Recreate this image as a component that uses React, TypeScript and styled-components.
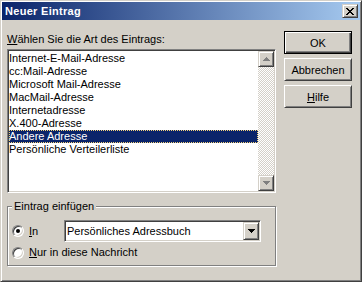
import styled, { createGlobalStyle } from 'styled-components'

const FACE = '#D4D0C8'

const GlobalStyle = createGlobalStyle`
  body {
    margin: 0;
    background: ${FACE};
    font-family: 'Liberation Sans', Arial, sans-serif;
    font-size: 11px;
    color: #000;
  }
`

const Window = styled.div`
  width: 362px;
  height: 282px;
  box-sizing: border-box;
  display: flex;
  flex-direction: column;
  padding: 1px;
  background: ${FACE};
  border: 1px solid;
  border-color: ${FACE} #404040 #404040 ${FACE};
  box-shadow: inset 1px 1px #fff, inset -1px -1px #808080;
`

const TitleBar = styled.div`
  height: 18px;
  flex: none;
  display: flex;
  align-items: center;
  justify-content: space-between;
  padding: 0 2px 0 3px;
  background: linear-gradient(90deg, #0a246a, #a6caf0);
`

const Title = styled.span`
  color: #fff;
  font-weight: bold;
  line-height: 13px;
  letter-spacing: 0.3px;
`

const CaptionButton = styled.button`
  width: 16px;
  height: 14px;
  padding: 0;
  margin: 0;
  display: flex;
  align-items: center;
  justify-content: center;
  background: ${FACE};
  border: 1px solid;
  border-color: ${FACE} #404040 #404040 ${FACE};
  box-shadow: inset 1px 1px #fff, inset -1px -1px #808080;
`

const Body = styled.div`
  flex: 1;
  display: flex;
  gap: 8px;
  padding: 11px 6px 0 5px;
`

const LeftColumn = styled.div`
  width: 269px;
  display: flex;
  flex-direction: column;
`

const Label = styled.div`
  margin-top: 2px;
  line-height: 13px;
`

const Accel = styled.u`
  text-decoration: underline;
  text-underline-offset: 1px;
`

const Sunken = styled.div`
  box-sizing: border-box;
  padding: 1px;
  background: #fff;
  border: 1px solid;
  border-color: #808080 #fff #fff #808080;
  box-shadow: inset 1px 1px #404040, inset -1px -1px ${FACE};
  display: flex;
`

const ListBox = styled(Sunken)`
  margin-top: 3px;
  height: 144px;
`

const Items = styled.ul`
  flex: 1;
  list-style: none;
  margin: 0;
  padding: 1px 0 0;
`

const Item = styled.li<{ $selected?: boolean }>`
  height: 13px;
  line-height: 13px;
  white-space: nowrap;
  background: ${(p) => (p.$selected ? '#0a246a' : 'transparent')};
  color: ${(p) => (p.$selected ? '#fff' : '#000')};
  outline: ${(p) => (p.$selected ? '1px dotted #f3d27a' : 'none')};
  outline-offset: -1px;
`

const ScrollBar = styled.div`
  width: 16px;
  display: flex;
  flex-direction: column;
`

const Raised = styled.div`
  box-sizing: border-box;
  display: flex;
  align-items: center;
  justify-content: center;
  background: ${FACE};
  border: 1px solid;
  border-color: ${FACE} #404040 #404040 ${FACE};
  box-shadow: inset 1px 1px #fff, inset -1px -1px #808080;
`

const ScrollButton = styled(Raised)`
  width: 16px;
  height: 16px;
  flex: none;
`

const Track = styled.div`
  flex: 1;
  background: repeating-conic-gradient(#fff 0 25%, ${FACE} 0 50%) 0 0 / 2px 2px;
`

const GroupBox = styled.fieldset`
  margin: 7px 0 0;
  padding: 7px 14px 6px 4px;
  border: 1px solid #808080;
  box-shadow: inset 1px 1px #fff, 1px 1px #fff;
  min-width: 0;
`

const Legend = styled.legend`
  padding: 0 2px;
  margin: 0;
  line-height: 13px;
  background: ${FACE};
`

const OptionRow = styled.div<{ $tall?: boolean }>`
  display: flex;
  align-items: center;
  height: ${(p) => (p.$tall ? '22px' : '13px')};
  margin-top: ${(p) => (p.$tall ? '0' : '4px')};
`

const Option = styled.label<{ $width?: number }>`
  display: flex;
  align-items: center;
  gap: 5px;
  line-height: 13px;
  width: ${(p) => (p.$width ? `${p.$width}px` : 'auto')};
  white-space: nowrap;
`

const Radio = styled.span<{ $checked?: boolean }>`
  position: relative;
  width: 12px;
  height: 12px;
  box-sizing: border-box;
  flex: none;
  border-radius: 50%;
  background: #fff;
  border: 1px solid;
  border-color: #808080 #fff #fff #808080;
  box-shadow: inset 1px 1px #404040, inset -1px -1px ${FACE};

  &::after {
    content: '';
    display: ${(p) => (p.$checked ? 'block' : 'none')};
    position: absolute;
    left: 3px;
    top: 3px;
    width: 4px;
    height: 4px;
    border-radius: 50%;
    background: #000;
  }
`

const ComboBox = styled(Sunken)`
  width: 197px;
  height: 22px;
`

const ComboText = styled.span`
  flex: 1;
  padding-left: 1px;
  line-height: 18px;
  white-space: nowrap;
`

const ComboButton = styled(Raised)`
  width: 16px;
  height: 18px;
`

const ButtonColumn = styled.div`
  display: flex;
  flex-direction: column;
  gap: 4px;
`

const PushButton = styled.button<{ $default?: boolean }>`
  width: 68px;
  height: 23px;
  padding: 0;
  margin: 0;
  font: inherit;
  color: #000;
  background: ${FACE};
  border: 1px solid;
  border-color: ${(p) => (p.$default ? '#000' : '#fff #404040 #404040 #fff')};
  box-shadow: ${(p) =>
    p.$default
      ? 'inset 1px 1px #fff, inset -1px -1px #404040, inset -2px -2px #808080'
      : `inset 1px 1px ${FACE}, inset -1px -1px #808080`};
`

function Arrow({ up, color }: { up?: boolean; color: string }) {
  const pts = up ? '3.5,0 7,4 0,4' : '0,0 7,0 3.5,4'
  return (
    <svg width="7" height="4" viewBox="0 0 7 4" shapeRendering="crispEdges">
      <polygon points={pts} fill={color} />
    </svg>
  )
}

function CloseGlyph() {
  const rects = [
    [0, 0, 2], [6, 0, 2],
    [1, 1, 2], [5, 1, 2],
    [2, 2, 4],
    [3, 3, 2],
    [2, 4, 4],
    [1, 5, 2], [5, 5, 2],
    [0, 6, 2], [6, 6, 2],
  ]
  return (
    <svg width="8" height="7" viewBox="0 0 8 7" shapeRendering="crispEdges">
      {rects.map(([x, y, w], i) => (
        <rect key={i} x={x} y={y} width={w} height={1} fill="#000" />
      ))}
    </svg>
  )
}

const entries = [
  'Internet-E-Mail-Adresse',
  'cc:Mail-Adresse',
  'Microsoft Mail-Adresse',
  'MacMail-Adresse',
  'Internetadresse',
  'X.400-Adresse',
  'Andere Adresse',
  'Persönliche Verteilerliste',
]

export default function App() {
  return (
    <>
      <GlobalStyle />
      <Window>
        <TitleBar>
          <Title>Neuer Eintrag</Title>
          <CaptionButton aria-label="Schließen">
            <CloseGlyph />
          </CaptionButton>
        </TitleBar>
        <Body>
          <LeftColumn>
            <Label>
              <Accel>W</Accel>ählen Sie die Art des Eintrags:
            </Label>
            <ListBox>
              <Items>
                {entries.map((e) => (
                  <Item key={e} $selected={e === 'Andere Adresse'}>
                    {e}
                  </Item>
                ))}
              </Items>
              <ScrollBar>
                <ScrollButton>
                  <Arrow up color="#808080" />
                </ScrollButton>
                <Track />
                <ScrollButton>
                  <Arrow color="#808080" />
                </ScrollButton>
              </ScrollBar>
            </ListBox>
            <GroupBox>
              <Legend>Eintrag einfügen</Legend>
              <OptionRow $tall>
                <Option $width={52}>
                  <Radio $checked />
                  <span>
                    <Accel>I</Accel>n
                  </span>
                </Option>
                <ComboBox>
                  <ComboText>Persönliches Adressbuch</ComboText>
                  <ComboButton>
                    <Arrow color="#000" />
                  </ComboButton>
                </ComboBox>
              </OptionRow>
              <OptionRow>
                <Option>
                  <Radio />
                  <span>
                    <Accel>N</Accel>ur in diese Nachricht
                  </span>
                </Option>
              </OptionRow>
            </GroupBox>
          </LeftColumn>
          <ButtonColumn>
            <PushButton $default>OK</PushButton>
            <PushButton>Abbrechen</PushButton>
            <PushButton>
              <Accel>H</Accel>ilfe
            </PushButton>
          </ButtonColumn>
        </Body>
      </Window>
    </>
  )
}
